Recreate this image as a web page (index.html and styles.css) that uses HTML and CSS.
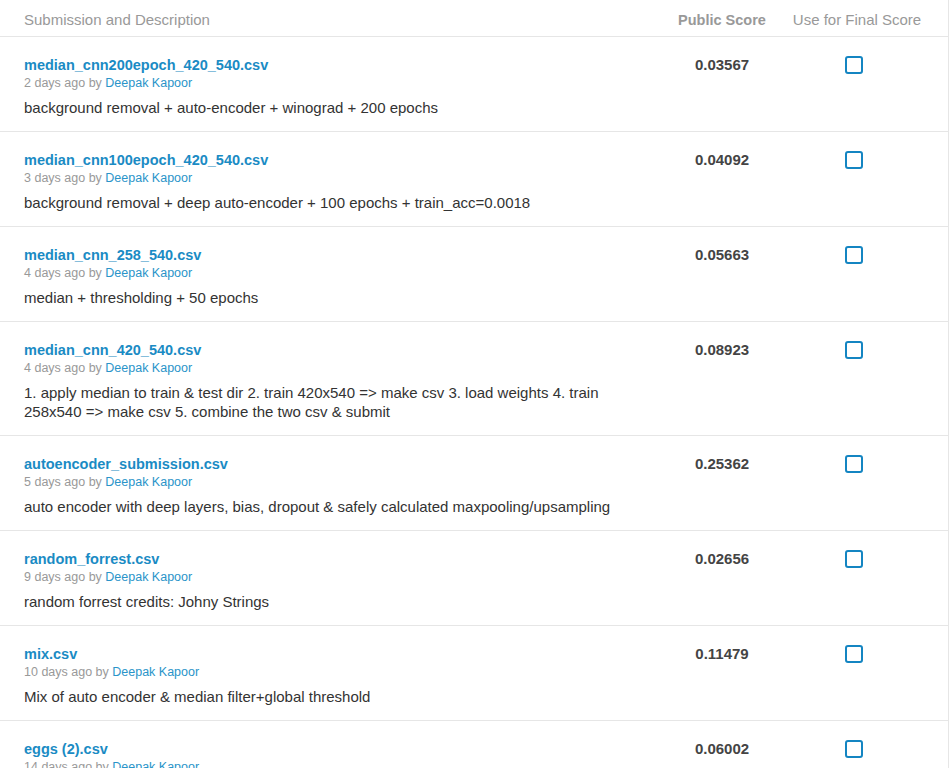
FILE: index.html
```html
<!DOCTYPE html>
<html>
<head>
<meta charset="utf-8">
<link rel="stylesheet" href="styles.css">
</head>
<body>
<div class="table">
  <div class="head">
    <div class="c-desc">Submission and Description</div>
    <div class="c-score bold">Public Score</div>
    <div class="c-use">Use for Final Score</div>
  </div>

  <div class="row">
    <div class="c-desc">
      <a class="title">median_cnn200epoch_420_540.csv</a>
      <div class="meta">2 days ago by <a class="user">Deepak Kapoor</a></div>
      <div class="desc">background removal + auto-encoder + winograd + 200 epochs</div>
    </div>
    <div class="c-score score">0.03567</div>
    <div class="c-use"><span class="check"></span></div>
  </div>

  <div class="row">
    <div class="c-desc">
      <a class="title">median_cnn100epoch_420_540.csv</a>
      <div class="meta">3 days ago by <a class="user">Deepak Kapoor</a></div>
      <div class="desc">background removal + deep auto-encoder + 100 epochs + train_acc=0.0018</div>
    </div>
    <div class="c-score score">0.04092</div>
    <div class="c-use"><span class="check"></span></div>
  </div>

  <div class="row">
    <div class="c-desc">
      <a class="title">median_cnn_258_540.csv</a>
      <div class="meta">4 days ago by <a class="user">Deepak Kapoor</a></div>
      <div class="desc">median + thresholding + 50 epochs</div>
    </div>
    <div class="c-score score">0.05663</div>
    <div class="c-use"><span class="check"></span></div>
  </div>

  <div class="row">
    <div class="c-desc">
      <a class="title">median_cnn_420_540.csv</a>
      <div class="meta">4 days ago by <a class="user">Deepak Kapoor</a></div>
      <div class="desc">1. apply median to train &amp; test dir 2. train 420x540 =&gt; make csv 3. load weights 4. train 258x540 =&gt; make csv 5. combine the two csv &amp; submit</div>
    </div>
    <div class="c-score score">0.08923</div>
    <div class="c-use"><span class="check"></span></div>
  </div>

  <div class="row">
    <div class="c-desc">
      <a class="title">autoencoder_submission.csv</a>
      <div class="meta">5 days ago by <a class="user">Deepak Kapoor</a></div>
      <div class="desc">auto encoder with deep layers, bias, dropout &amp; safely calculated maxpooling/upsampling</div>
    </div>
    <div class="c-score score">0.25362</div>
    <div class="c-use"><span class="check"></span></div>
  </div>

  <div class="row">
    <div class="c-desc">
      <a class="title">random_forrest.csv</a>
      <div class="meta">9 days ago by <a class="user">Deepak Kapoor</a></div>
      <div class="desc">random forrest credits: Johny Strings</div>
    </div>
    <div class="c-score score">0.02656</div>
    <div class="c-use"><span class="check"></span></div>
  </div>

  <div class="row">
    <div class="c-desc">
      <a class="title">mix.csv</a>
      <div class="meta">10 days ago by <a class="user">Deepak Kapoor</a></div>
      <div class="desc">Mix of auto encoder &amp; median filter+global threshold</div>
    </div>
    <div class="c-score score">0.11479</div>
    <div class="c-use"><span class="check"></span></div>
  </div>

  <div class="row">
    <div class="c-desc">
      <a class="title">eggs (2).csv</a>
      <div class="meta">14 days ago by <a class="user">Deepak Kapoor</a></div>
      <div class="desc">&nbsp;</div>
    </div>
    <div class="c-score score">0.06002</div>
    <div class="c-use"><span class="check"></span></div>
  </div>
</div>
</body>
</html>
```

FILE: styles.css
```css
html, body {
  margin: 0;
  padding: 0;
  background: #fff;
}
body {
  font-family: "Liberation Sans", Arial, sans-serif;
  color: #333;
  overflow: hidden;
}
.table {
  width: 948px;
  border-right: 1px solid #e6e6e6;
  height: 768px;
  overflow: hidden;
}
.head, .row {
  display: grid;
  grid-template-columns: 652px 140px 1fr;
  border-bottom: 1px solid #e6e6e6;
}
.head {
  height: 25px;
  padding-top: 11px;
  align-items: start;
  font-size: 15px;
  line-height: 18px;
  color: #999;
}
.head .bold {
  font-weight: bold;
  font-size: 14.5px;
}
.c-desc {
  padding-left: 24px;
  padding-right: 36px;
}
.c-score {
  text-align: center;
}
.c-use {
  text-align: center;
  padding-right: 26px;
}
.row {
  padding: 19px 0 14px;
}
.title {
  display: block;
  color: #1a8bc4;
  font-weight: bold;
  font-size: 14.5px;
  line-height: 18px;
}
.meta {
  font-size: 12.5px;
  line-height: 18px;
  color: #999;
}
.user {
  color: #2a94c9;
}
.desc {
  margin-top: 6px;
  font-size: 15px;
  line-height: 19px;
  color: #333;
}
.score {
  font-weight: bold;
  font-size: 15px;
  line-height: 18px;
  color: #444;
}
.check {
  display: inline-block;
  width: 14px;
  height: 14px;
  border: 2px solid #1485c2;
  border-radius: 3px;
  margin-top: 0;
  margin-right: 6px;
}
```
